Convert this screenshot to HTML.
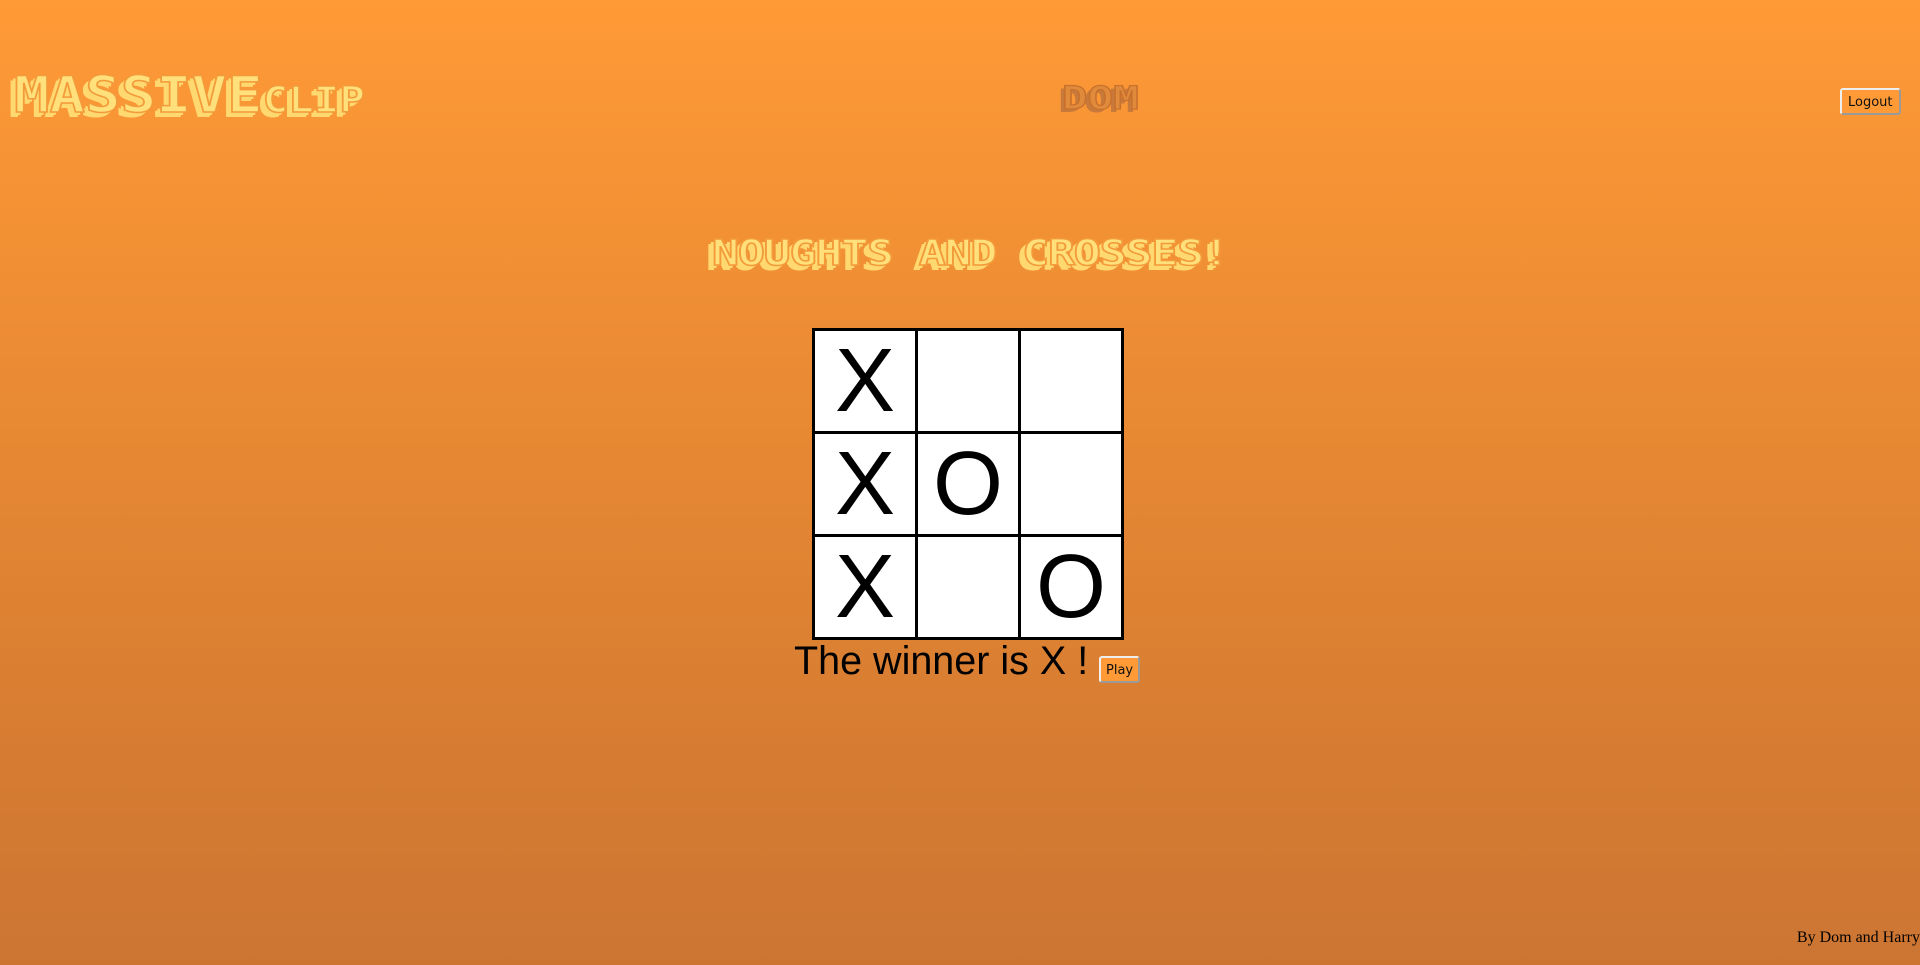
<!DOCTYPE html>
<html><head><meta charset="utf-8"><style>
html,body{margin:0;padding:0;width:1920px;height:965px;overflow:hidden}
body{background:linear-gradient(to bottom,#ff9a36 0%,#ef8e34 30%,#da7f32 70%,#cc7533 100%);font-family:"Liberation Sans",sans-serif;position:relative}
.fancy{position:absolute;font-family:"DejaVu Sans Mono",monospace;font-weight:bold;white-space:nowrap;color:#ffe07a;-webkit-text-stroke:1.5px #f39a3a;text-shadow:-3px 3px 0 #ffd870,-5px 5px 0 #ffd870;line-height:1}
#logo{left:14px;top:70px;font-size:50px;transform-origin:left top;transform:scaleX(1.18)}
#logo small{font-size:36px}
#dom{left:1062px;top:82px;font-size:32px;color:#e08a3c;-webkit-text-stroke:1.2px #c8702c;text-shadow:-3px 3px 0 #c87a3a;transform-origin:left top;transform:scaleX(1.33)}
#title{left:712px;top:236px;font-size:36px;letter-spacing:-1px;transform-origin:left top;transform:scaleX(1.25)}
.btn{position:absolute;background:#ff9a36;border:2px outset #eee;border-radius:3px;font-family:"DejaVu Sans",sans-serif;font-size:13px;color:#111;padding:0 6px;line-height:26px;box-sizing:border-box}
#logout{left:1840px;top:88px;height:27px}
#play{left:1099px;top:656px;height:27px;padding:0 5px}
table{position:absolute;left:812px;top:328px;border-collapse:collapse}
td{width:100px;height:100px;border:3px solid #000;background:#fff;padding:0;text-align:center;vertical-align:middle;font-size:90px;line-height:90px}
#win{position:absolute;left:794px;top:639px;font-size:39.5px}
#foot{position:absolute;right:0;top:929px;font-family:"Liberation Serif",serif;font-size:16px;color:#000}
</style></head><body>
<div class="fancy" id="logo">MASSIVE<small>CLIP</small></div>
<div class="fancy" id="dom">DOM</div>
<div class="btn" id="logout">Logout</div>
<div class="fancy" id="title">NOUGHTS AND CROSSES!</div>
<table>
<tr><td>X</td><td></td><td></td></tr>
<tr><td>X</td><td>O</td><td></td></tr>
<tr><td>X</td><td></td><td>O</td></tr>
</table>
<div id="win">The winner is X !</div>
<div class="btn" id="play">Play</div>
<div id="foot">By Dom and Harry</div>
</body></html>
